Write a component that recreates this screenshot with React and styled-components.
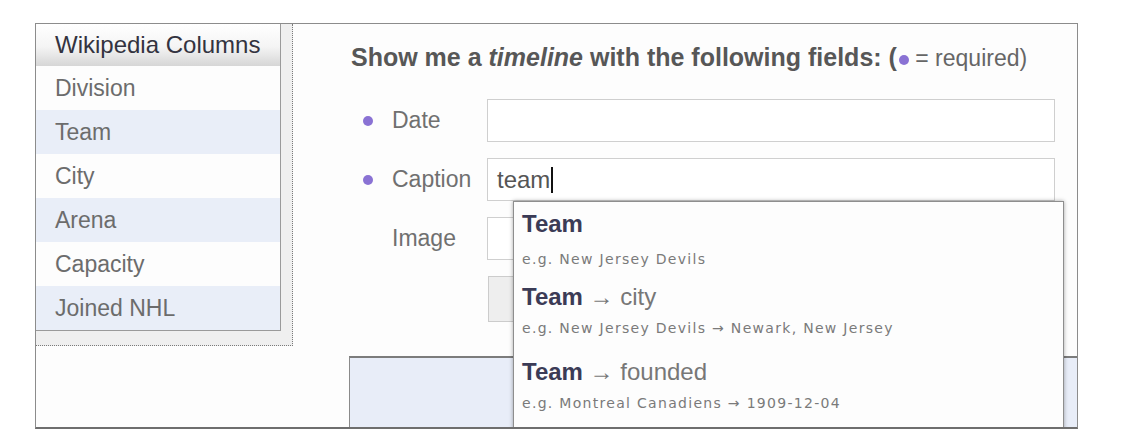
import React from 'react';
import styled, { createGlobalStyle } from 'styled-components';

const GlobalStyle = createGlobalStyle`
    body {
        margin: 0;
        background: #ffffff;
        font-family: "Liberation Sans", Arial, sans-serif;
    }
`

const Frame = styled.div`
    box-sizing: border-box;
    margin: 23px 0 0 35px;
    width: 1043px;
    height: 406px;
    border: 1px solid #8c8c8c;
    border-bottom: 2px solid #6e6e6e;
    background: #fdfdfd;
    display: flex;
    align-items: flex-start;
    overflow: hidden;
`

const Sidebar = styled.div`
    box-sizing: border-box;
    width: 257px;
    flex-shrink: 0;
    padding: 0 11px 14px 0;
    background: #efefef;
    border-right: 1px dotted #7a7a7a;
    border-bottom: 1px dotted #7a7a7a;
`

const ColumnList = styled.div`
    border-right: 1px solid #9a9a9a;
    border-bottom: 1px solid #9a9a9a;
    background: #ffffff;
`

const ListHeader = styled.div`
    height: 42px;
    line-height: 42px;
    padding-left: 19px;
    font-size: 24px;
    color: #333340;
    background: linear-gradient(#ffffff 0%, #f4f4f4 55%, #d6d6d6 100%);
`

const ListRow = styled.div`
    height: 44px;
    line-height: 44px;
    padding-left: 19px;
    font-size: 23px;
    color: #6c6c6c;
    background: ${(props) => (props.alt ? "#e9eef8" : "#fdfdfd")};
`

const Main = styled.div`
    position: relative;
    flex: 1;
    display: flex;
    flex-direction: column;
`

const Title = styled.div`
    margin: 18px 0 0 58px;
    line-height: 30px;
    font-size: 25px;
    font-weight: bold;
    color: #575757;
    white-space: nowrap;

    em {
        font-style: italic;
    }
`

const Legend = styled.span`
    font-weight: normal;
    font-size: 23px;
    color: #666666;
`

const Fields = styled.div`
    margin-top: 26px;
    padding-left: 70px;
    display: flex;
    flex-direction: column;
    gap: 16px;
`

const FieldRow = styled.div`
    display: flex;
    align-items: center;
`

const Bullet = styled.span`
    display: inline-block;
    width: 10px;
    height: 10px;
    border-radius: 50%;
    background: ${(props) => (props.$blank ? "transparent" : "#8a72d4")};
    margin: 0 ${(props) => props.$gap ?? 19}px 0 ${(props) => props.$lead ?? 0}px;
    flex-shrink: 0;
    vertical-align: middle;
`

const Label = styled.div`
    width: 95px;
    font-size: 23px;
    color: #707070;
`

const TextBox = styled.div`
    box-sizing: border-box;
    flex: 1;
    margin-right: 22px;
    height: 43px;
    border: 1px solid #cfcfcf;
    background: #ffffff;
    padding-left: 9px;
    display: flex;
    align-items: center;
    font-size: 24px;
    color: #555555;
`

const Caret = styled.span`
    display: inline-block;
    width: 2px;
    height: 26px;
    margin-left: 1px;
    background: #111111;
`

const ButtonBox = styled.div`
    box-sizing: border-box;
    margin-left: 125px;
    width: 200px;
    height: 46px;
    border: 1px solid #cccccc;
    background: #eeeeee;
`

const Preview = styled.div`
    margin: 34px 0 0 56px;
    height: 120px;
    border-top: 2px solid #7c7c7c;
    border-left: 1px solid #8a8a8a;
    background: #e8edf8;
`

const Suggest = styled.div`
    position: absolute;
    left: 220px;
    top: 177px;
    width: 551px;
    height: 260px;
    box-sizing: border-box;
    border: 1px solid #8e8e8e;
    background: #fdfdfd;
    box-shadow: 0 0 4px rgba(0, 0, 0, 0.35);
`

const SuggestItem = styled.div`
    padding: 8px 8px ${(props) => (props.$first ? 7 : 13)}px;
`

const SuggestTitle = styled.div`
    line-height: 28px;
    font-size: 24px;
    color: #777777;

    b {
        color: #3b3b56;
    }
`

const SuggestHint = styled.div`
    margin-top: ${(props) => (props.$first ? 12 : 8)}px;
    line-height: 18px;
    font-family: "DejaVu Sans", Verdana, sans-serif;
    font-size: 14px;
    letter-spacing: 1.3px;
    color: #7a7a7a;
    white-space: nowrap;
`

const columns = ["Division", "Team", "City", "Arena", "Capacity", "Joined NHL"]

const suggestions = [
    { field: null, hint: "e.g. New Jersey Devils" },
    { field: "city", hint: "e.g. New Jersey Devils \u2192 Newark, New Jersey" },
    { field: "founded", hint: "e.g. Montreal Canadiens \u2192 1909-12-04" },
]

const App = () => {
    return (
        <>
            <GlobalStyle />
            <Frame>
                <Sidebar>
                    <ColumnList>
                        <ListHeader>Wikipedia Columns</ListHeader>
                        {columns.map((c, i) => (
                            <ListRow key={c} alt={i % 2 === 1}>{c}</ListRow>
                        ))}
                    </ColumnList>
                </Sidebar>

                <Main>
                    <Title>
                        Show me a <em>timeline</em> with the following fields: (
                        <Legend><Bullet $lead={2} $gap={0} /> = required)</Legend>
                    </Title>

                    <Fields>
                        <FieldRow>
                            <Bullet />
                            <Label>Date</Label>
                            <TextBox />
                        </FieldRow>
                        <FieldRow>
                            <Bullet />
                            <Label>Caption</Label>
                            <TextBox>team<Caret /></TextBox>
                        </FieldRow>
                        <FieldRow>
                            <Bullet $blank />
                            <Label>Image</Label>
                            <TextBox />
                        </FieldRow>
                        <FieldRow>
                            <ButtonBox />
                        </FieldRow>
                    </Fields>

                    <Preview />

                    <Suggest>
                        {suggestions.map((s, i) => (
                            <SuggestItem key={s.hint} $first={i === 0}>
                                <SuggestTitle>
                                    <b>Team</b>{s.field && <> {"\u2192"} {s.field}</>}
                                </SuggestTitle>
                                <SuggestHint $first={i === 0}>{s.hint}</SuggestHint>
                            </SuggestItem>
                        ))}
                    </Suggest>
                </Main>
            </Frame>
        </>
    );
};

export default App;
